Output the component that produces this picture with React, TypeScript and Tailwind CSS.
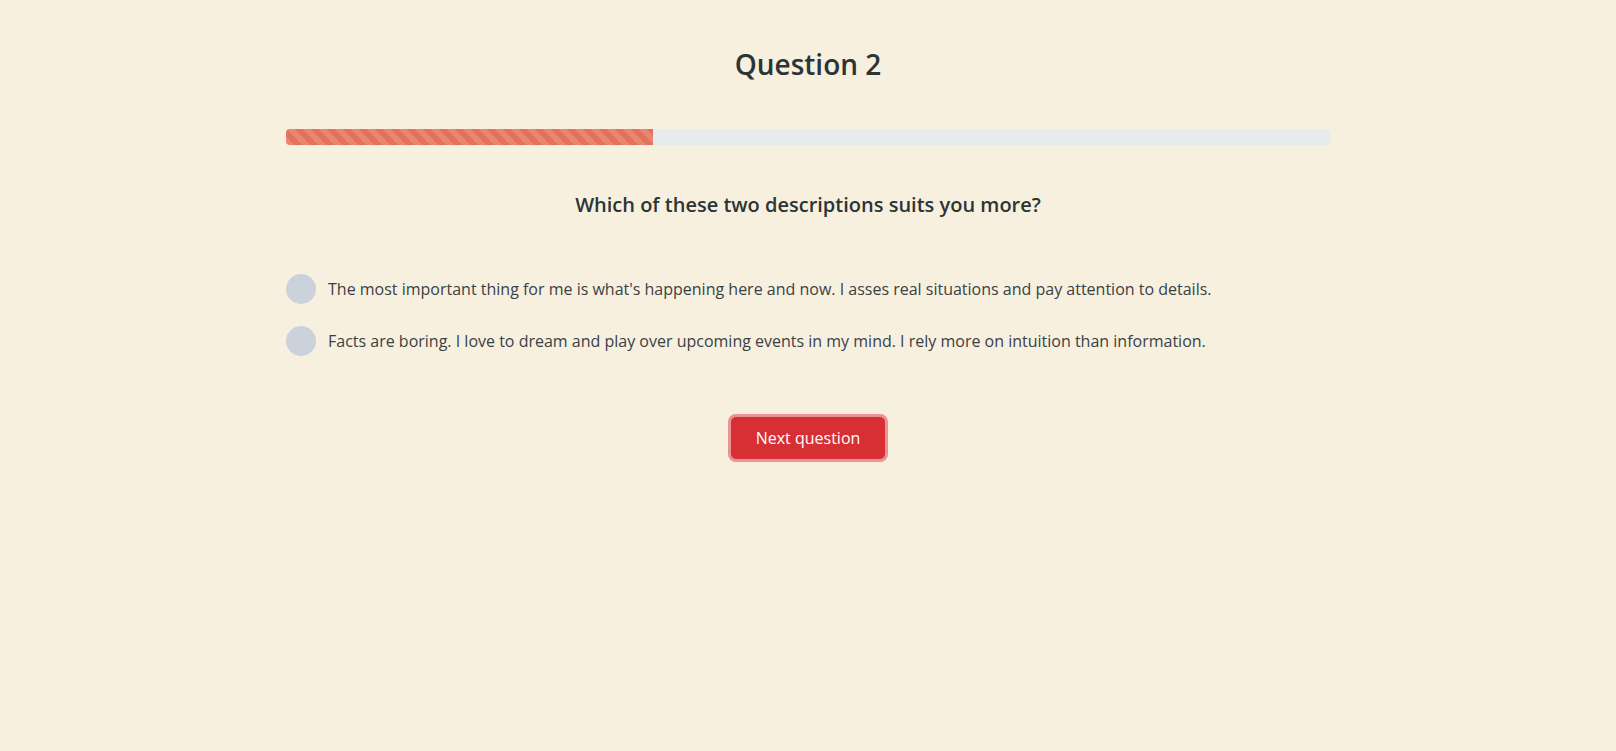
import React from "react";

const options = [
  "The most important thing for me is what's happening here and now. I asses real situations and pay attention to details.",
  "Facts are boring. I love to dream and play over upcoming events in my mind. I rely more on intuition than information.",
];

export default function App() {
  return (
    <div
      className="min-h-[751px] bg-[#f7f0de] text-[#2d3436]"
      style={{ fontFamily: '"Open Sans", "Noto Sans", sans-serif' }}
    >
      <div className="w-[1044px] mx-auto pt-[43px]">
        <h1 className="text-[28px] leading-[42px] font-semibold text-center text-[#2d3436]">
          Question 2
        </h1>
        <div className="mt-[44px] h-4 rounded-[4px] bg-[#e8ebee] overflow-hidden flex">
          <div className="h-full w-[367px] bg-[#e4715b] bg-[linear-gradient(45deg,rgba(255,255,255,.15)_25%,transparent_25%,transparent_50%,rgba(255,255,255,.15)_50%,rgba(255,255,255,.15)_75%,transparent_75%,transparent)] bg-[length:16px_16px]" />
        </div>
        <h2 className="mt-[45px] text-[20px] leading-[30px] font-semibold text-center text-[#2d3436]">
          Which of these two descriptions suits you more?
        </h2>
        <div className="mt-[54px] flex flex-col gap-[22px]">
          {options.map((o) => (
            <label key={o} className="flex items-center gap-3 cursor-pointer">
              <span className="w-[30px] h-[30px] rounded-full bg-[#cbd2dc] shrink-0" />
              <span className="text-[16px] leading-6 text-[#3a4145]">{o}</span>
            </label>
          ))}
        </div>
        <div className="mt-[61px] flex justify-center">
          <button className="w-[154px] h-[42px] rounded-[5px] bg-[#d72f33] text-white text-[16px] shadow-[0_0_0_3px_rgba(220,53,69,0.5)]">
            Next question
          </button>
        </div>
      </div>
    </div>
  );
}
